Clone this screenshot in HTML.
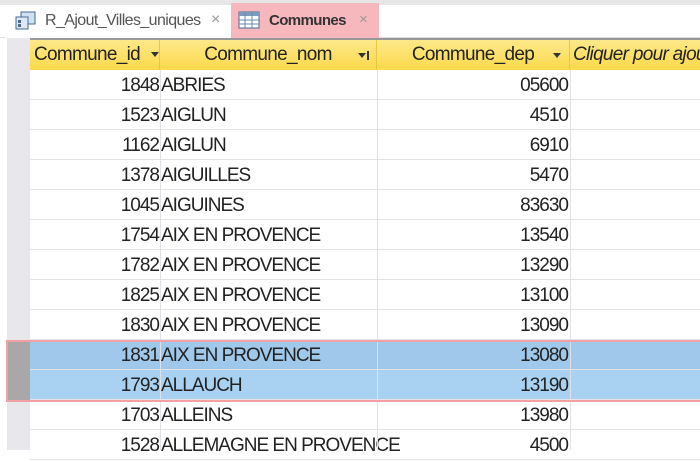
<!DOCTYPE html><html><head><style>
*{margin:0;padding:0;box-sizing:border-box}
body{width:700px;height:450px;overflow:hidden;background:#fff;font-family:"Liberation Sans",sans-serif;position:relative}
.top{position:absolute;left:0;top:0;width:700px;height:5px;background:#e6e6e6}
.tabbar{position:absolute;left:0;top:5px;width:700px;height:33px;background:#fff;border-bottom:1px solid #ddd}
.t1{position:absolute;left:5px;top:5px;width:226px;height:33px;background:#fff;font-size:16px;color:#555;letter-spacing:-0.6px}
.t2{position:absolute;left:231px;top:3px;width:148px;height:36px;background:#f6b8bd;font-size:15px;font-weight:bold;color:#333;letter-spacing:-0.6px}
.hdr{position:absolute;top:38px;left:30px;width:670px;height:32px;background:linear-gradient(#fde98a,#fcd94a);border-top:2px solid #999;font-size:19px;color:#222;letter-spacing:-0.7px}
.hdr div{position:absolute;top:0;height:30px;line-height:30px;border-right:1px solid #e8c840}
.sel{position:absolute;left:7px;top:38px;width:23px;height:412px;background:#e8e8ec}
.row{position:absolute;left:30px;width:670px;height:30px;border-bottom:1px solid #e3e3e8;font-size:19px;color:#222;letter-spacing:-1px;line-height:31px}
.row span{position:absolute;top:0}
.c1{left:0;width:129px;text-align:right}
.c2{left:131px}
.c3{left:347px;width:191px;text-align:right}
.vl{position:absolute;top:70px;height:380px;width:1px;background:#e0e0e6}
.arr{display:inline-block;width:0;height:0;border-left:4px solid transparent;border-right:4px solid transparent;border-top:5px solid #333;vertical-align:middle}
</style></head><body>
<div class="top"></div>
<div class="tabbar"></div>
<div class="t1"><svg style="position:absolute;left:10px;top:6px" width="22" height="20"><rect x="6" y="1" width="14" height="12" fill="#cfe0f0" stroke="#4a6a90"/><rect x="1" y="6" width="12" height="12" fill="#dde8f4" stroke="#4a6a90"/><rect x="3" y="9" width="3" height="3" fill="#4a6a90"/><rect x="3" y="13" width="3" height="3" fill="#4a6a90"/></svg><span style="position:absolute;left:40px;top:7px">R_Ajout_Villes_uniques</span><span style="position:absolute;left:206px;top:6px;color:#999">×</span></div>
<div class="t2"><svg style="position:absolute;left:7px;top:8px" width="22" height="18"><rect x="1" y="1" width="20" height="16" fill="#fff" stroke="#4a6a90"/><rect x="1" y="1" width="20" height="4" fill="#7a9cc0"/><path d="M1 9H21M1 13H21M7 1V17M14 1V17" stroke="#6a8ab0"/></svg><span style="position:absolute;left:38px;top:9px">Communes</span><span style="position:absolute;left:128px;top:8px;color:#999;font-weight:normal">×</span></div>
<div class="sel"></div>
<div class="hdr">
<div style="left:0;width:130px;padding-left:4px">Commune_id <span class="arr" style="margin-left:6px"></span></div>
<div style="left:130px;width:217px;text-align:center">Commune_nom<span class="arr" style="position:absolute;right:10px;top:13px"></span><span style="position:absolute;right:7px;top:11px;width:2px;height:9px;background:#333"></span></div>
<div style="left:347px;width:193px;text-align:center">Commune_dep<span class="arr" style="position:absolute;right:8px;top:13px"></span></div>
<div style="left:541px;width:140px;padding-left:2px;font-style:italic;border:none;white-space:nowrap">Cliquer pour ajou</div>
</div>
<div class="row" style="top:70px"><span class="c1">1848</span><span class="c2">ABRIES</span><span class="c3">05600</span></div>
<div class="row" style="top:100px"><span class="c1">1523</span><span class="c2">AIGLUN</span><span class="c3">4510</span></div>
<div class="row" style="top:130px"><span class="c1">1162</span><span class="c2">AIGLUN</span><span class="c3">6910</span></div>
<div class="row" style="top:160px"><span class="c1">1378</span><span class="c2">AIGUILLES</span><span class="c3">5470</span></div>
<div class="row" style="top:190px"><span class="c1">1045</span><span class="c2">AIGUINES</span><span class="c3">83630</span></div>
<div class="row" style="top:220px"><span class="c1">1754</span><span class="c2">AIX EN PROVENCE</span><span class="c3">13540</span></div>
<div class="row" style="top:250px"><span class="c1">1782</span><span class="c2">AIX EN PROVENCE</span><span class="c3">13290</span></div>
<div class="row" style="top:280px"><span class="c1">1825</span><span class="c2">AIX EN PROVENCE</span><span class="c3">13100</span></div>
<div class="row" style="top:310px"><span class="c1">1830</span><span class="c2">AIX EN PROVENCE</span><span class="c3">13090</span></div>
<div class="row" style="top:340px;background:#9fc8ea"><span class="c1">1831</span><span class="c2">AIX EN PROVENCE</span><span class="c3">13080</span></div>
<div class="row" style="top:370px;background:#a9d2f2"><span class="c1">1793</span><span class="c2">ALLAUCH</span><span class="c3">13190</span></div>
<div class="row" style="top:400px"><span class="c1">1703</span><span class="c2">ALLEINS</span><span class="c3">13980</span></div>
<div class="row" style="top:430px"><span class="c1">1528</span><span class="c2">ALLEMAGNE EN PROVENCE</span><span class="c3">4500</span></div>
<div class="vl" style="left:160px"></div><div class="vl" style="left:377px"></div><div class="vl" style="left:570px"></div>
<div style="position:absolute;left:7px;top:342px;width:23px;height:59px;background:#a8a8a8"></div>
<div style="position:absolute;left:6px;top:340px;width:694px;height:62px;border:2px solid #f2a0a4;border-right:none"></div>
</body></html>
